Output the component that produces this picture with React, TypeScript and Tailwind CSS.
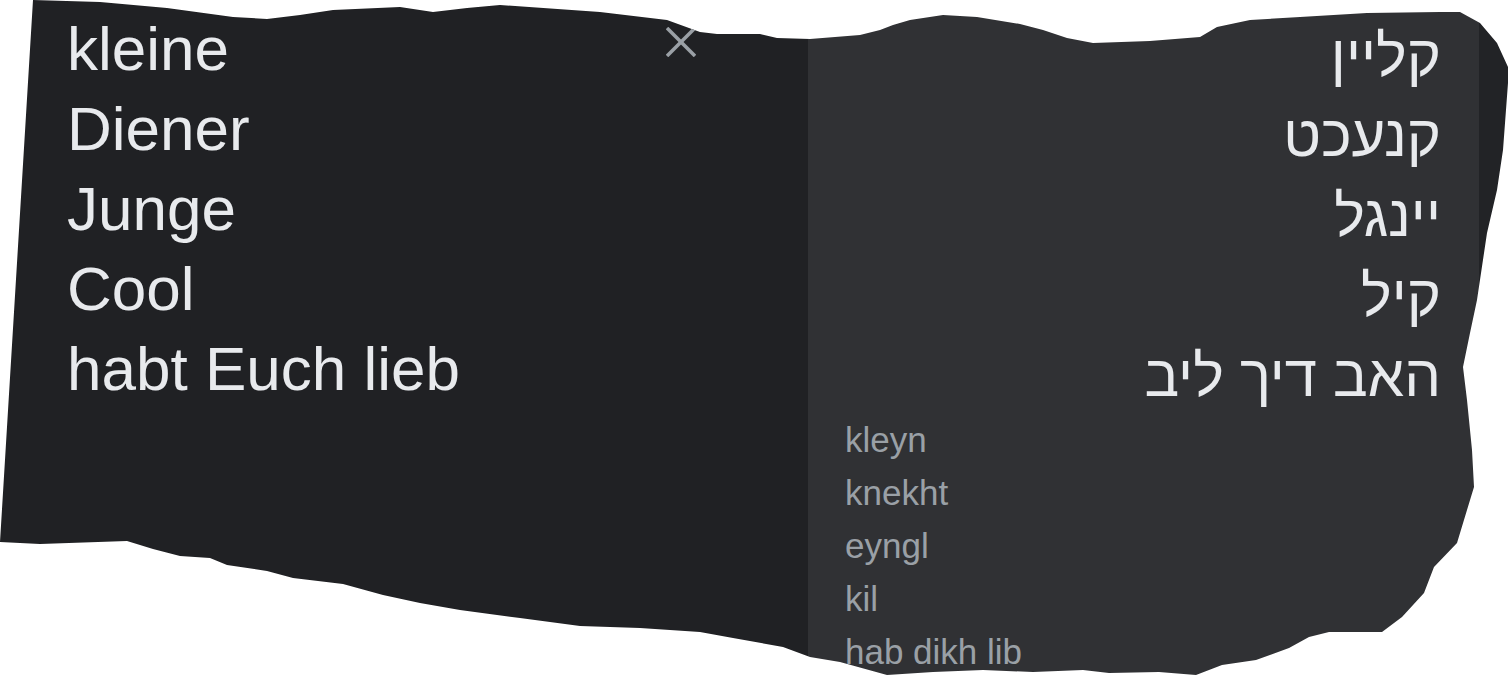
import React from 'react'

const german = ['kleine', 'Diener', 'Junge', 'Cool', 'habt Euch lieb']

const yiddish = ['קליין', 'קנעכט', 'יינגל', 'קיל', 'האב דיך ליב']

const romanized = ['kleyn', 'knekht', 'eyngl', 'kil', 'hab dikh lib']

function CloseIcon() {
  return (
    <svg width="30" height="30" viewBox="0 0 30 30" className="block">
      <line x1="1" y1="1" x2="29" y2="29" stroke="#9aa0a6" strokeWidth="3.5" />
      <line x1="29" y1="1" x2="1" y2="29" stroke="#9aa0a6" strokeWidth="3.5" />
    </svg>
  )
}

export default function App() {
  return (
    <div className="w-[1509px] h-[680px] bg-white overflow-hidden font-['Liberation_Sans','Noto_Sans',sans-serif]">

      {/* torn sheet */}
      <div className="flex w-full h-full [clip-path:polygon(33px_0px,100px_2px,167px_8px,233px_17px,267px_19px,300px_15px,333px_10px,400px_7px,433px_12px,467px_8px,500px_5px,600px_12px,667px_20px,700px_32px,717px_34px,760px_34px,777px_38px,810px_39px,860px_35px,880px_30px,893px_25px,910px_20px,943px_15px,977px_17px,1020px_24px,1043px_30px,1067px_38px,1093px_43px,1150px_41px,1200px_37px,1217px_27px,1250px_20px,1300px_17px,1367px_13px,1440px_12px,1460px_12px,1480px_23px,1497px_43px,1508px_67px,1508px_83px,1503px_150px,1497px_190px,1487px_233px,1477px_300px,1470px_333px,1463px_367px,1467px_400px,1472px_450px,1474px_487px,1467px_510px,1457px_543px,1434px_567px,1424px_593px,1402px_617px,1382px_632px,1329px_632px,1309px_637px,1289px_648px,1256px_660px,1222px_665px,1196px_675px,1159px_672px,1109px_673px,1083px_670px,1033px_672px,983px_670px,933px_672px,887px_675px,840px_662px,810px_657px,783px_647px,733px_638px,700px_632px,640px_628px,580px_626px,520px_618px,460px_610px,420px_603px,383px_595px,343px_584px,293px_578px,267px_571px,227px_565px,210px_558px,180px_556px,153px_549px,127px_541px,40px_544px,0px_542px)]">

        <section className="relative w-[808px] shrink-0 bg-[#202124] pl-[67px] pt-[9px]">
          {german.map((w) => (
            <div key={w} className="text-[62px] leading-[80px] text-[#e8eaed]">
              {w}
            </div>
          ))}

          <button className="absolute left-[666px] top-[27px]">
            <CloseIcon />
          </button>
        </section>

        <section className="flex-1 bg-[#303134] pt-[16px] pr-[38px] pl-[37px]">
          <div dir="rtl" className="text-right">
            {yiddish.map((w) => (
              <div key={w} className="text-[58px] leading-[80px] text-[#e8eaed]">
                {w}
              </div>
            ))}
          </div>

          <div className="-mt-[3px]">
            {romanized.map((w) => (
              <div key={w} className="text-[35px] leading-[53px] text-[#9aa0a6]">
                {w}
              </div>
            ))}
          </div>
        </section>

        <div className="w-[30px] shrink-0 bg-[#222326]" />

      </div>

    </div>
  )
}
